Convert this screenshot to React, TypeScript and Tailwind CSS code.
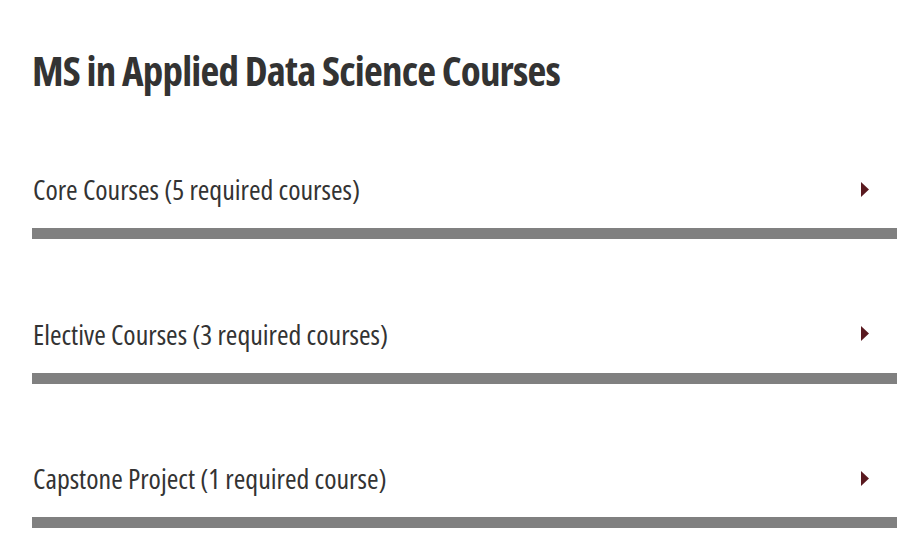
const sections = [
  "Core Courses (5 required courses)",
  "Elective Courses (3 required courses)",
  "Capstone Project (1 required course)",
];

const Caret = () => (
  <svg width="8" height="15" viewBox="0 0 8 15" className="shrink-0">
    <path d="M0 0 L8 7.5 L0 15 Z" fill="#5a1a20" />
  </svg>
);

export default function App() {
  return (
    <div
      className="min-h-screen bg-white text-[#333333] pl-8 pr-[19px] font-stretch-condensed"
      style={{ fontFamily: '"Open Sans", "Roboto Condensed", sans-serif' }}
    >
      <h2 className="pt-[46px] text-[41px] leading-[48px] font-bold tracking-[-0.8px]">
        MS in Applied Data Science Courses
      </h2>

      <div className="mt-[56px] flex flex-col gap-[55.5px]">
        {sections.map((title) => (
          <div key={title}>
            <button className="flex h-[78px] w-full items-center justify-between text-left">
              <span className="text-[28px] leading-none pl-px">{title}</span>
              <span className="pr-[28px]">
                <Caret />
              </span>
            </button>
            <div className="h-[11px] bg-[#808080]" />
          </div>
        ))}
      </div>
    </div>
  );
}
